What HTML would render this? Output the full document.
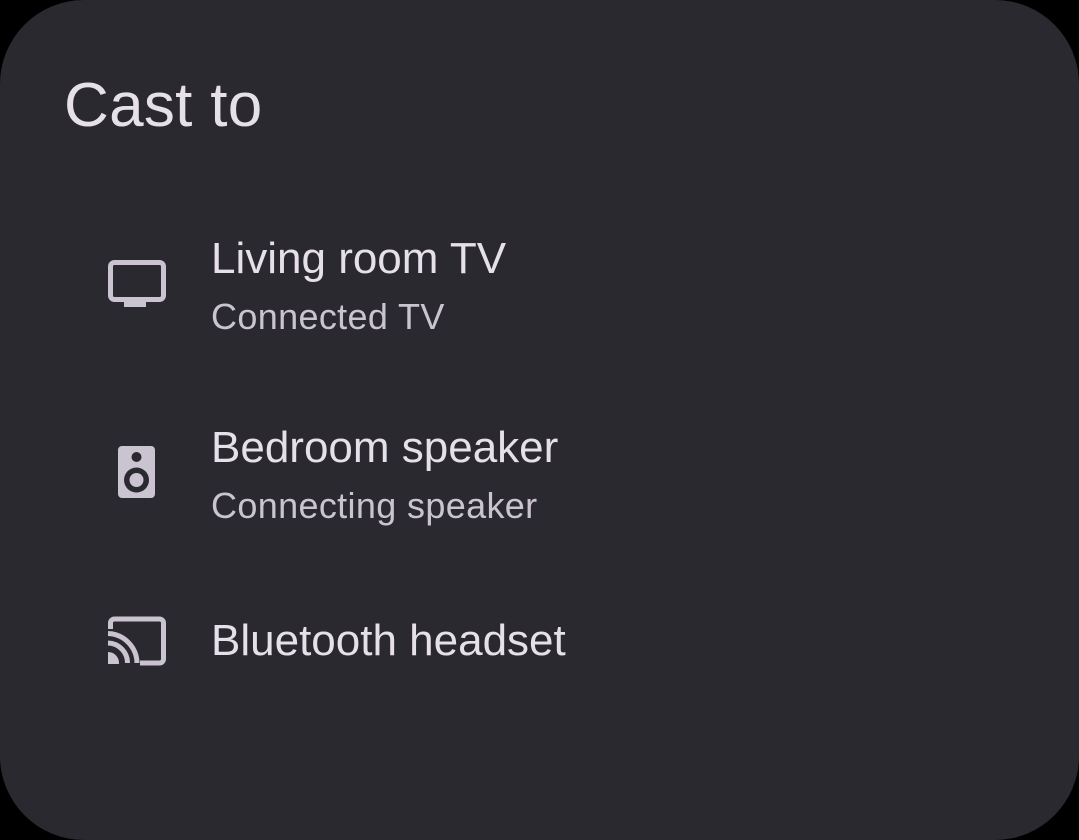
<!DOCTYPE html>
<html><head><style>
html,body{margin:0;padding:0;background:#000;width:1079px;height:840px;overflow:hidden;font-family:"Liberation Sans",sans-serif;}
.card{position:absolute;left:0;top:0;width:1079px;height:840px;background:#2b2930;border-radius:84px;}
.t{position:absolute;color:#e6e0e9;white-space:nowrap;}
h1{position:absolute;left:64px;top:70px;margin:0;font-weight:normal;font-size:62px;color:#e6e0e9;line-height:72px;letter-spacing:0.3px;}
.s{color:#cac4d0;letter-spacing:0.35px;}
svg{position:absolute;}
</style></head><body>
<div class="card">
<h1>Cast to</h1>
<svg style="left:106px;top:258px" width="62" height="52" viewBox="0 0 62 52">
<rect x="4.5" y="4.5" width="53" height="37" rx="4" fill="none" stroke="#cac4d0" stroke-width="5"/>
<rect x="18" y="42" width="22" height="7" fill="#cac4d0"/>
</svg>
<svg style="left:117px;top:445px" width="40" height="55" viewBox="0 0 40 55">
<rect x="1" y="1" width="37" height="52" rx="4" fill="#cac4d0"/>
<circle cx="19.5" cy="12" r="5" fill="#2b2930"/>
<circle cx="19.5" cy="35" r="12.5" fill="#2b2930"/>
<circle cx="19.5" cy="35" r="7" fill="#cac4d0"/>
</svg>
<svg style="left:106px;top:615px" width="62" height="52" viewBox="0 0 62 52">
<path d="M4.5 14 V8 a4 4 0 0 1 4-4 H53.5 a4 4 0 0 1 4 4 V44 a4 4 0 0 1 -4 4 H34" fill="none" stroke="#cac4d0" stroke-width="5"/>
<path d="M2 18.5 A30 30 0 0 1 31 48" fill="none" stroke="#cac4d0" stroke-width="5"/>
<path d="M2 28 A20 20 0 0 1 21.5 48" fill="none" stroke="#cac4d0" stroke-width="5"/>
<path d="M2 37 V49 H13 A11 11 0 0 0 2 37 Z" fill="#cac4d0"/>
</svg>
<div class="t" style="left:211px;top:234px;font-size:44px;">Living room TV</div>
<div class="t s" style="left:211px;top:296px;font-size:36px;">Connected TV</div>
<div class="t" style="left:211px;top:423px;font-size:44px;">Bedroom speaker</div>
<div class="t s" style="left:211px;top:485px;font-size:36px;">Connecting speaker</div>
<div class="t" style="left:211px;top:616px;font-size:44px;">Bluetooth headset</div>
</div>
</body></html>
